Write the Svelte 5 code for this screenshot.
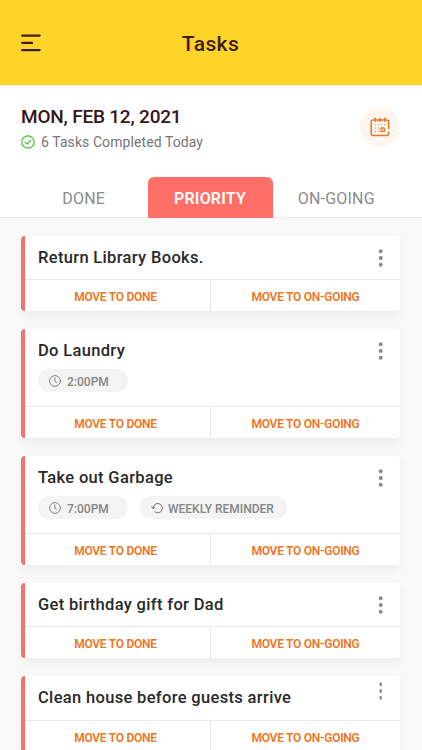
<script lang="ts">
  interface Task {
    id: number;
    title: string;
    time?: string;
    repeat?: string;
    narrowMenu?: boolean;
  }

  const tabs = ['DONE', 'PRIORITY', 'ON-GOING'];
  let activeTab = $state('PRIORITY');

  const tasks: Task[] = [
    { id: 1, title: 'Return Library Books.' },
    { id: 2, title: 'Do Laundry', time: '2:00PM' },
    { id: 3, title: 'Take out Garbage', time: '7:00PM', repeat: 'WEEKLY REMINDER' },
    { id: 4, title: 'Get birthday gift for Dad' },
    { id: 5, title: 'Clean house before guests arrive', narrowMenu: true },
  ];
</script>

<div class="screen">
  <header class="topbar">
    <button class="menu-btn" aria-label="Menu">
      <svg width="20" height="18" viewBox="0 0 20 18" fill="none" stroke="#3b1d12" stroke-width="2.3" stroke-linecap="round">
        <path d="M1.2 1.6h17.4M1.2 8.9H11M1.2 16.1h17.4" />
      </svg>
    </button>
    <h1>Tasks</h1>
  </header>

  <section class="summary">
    <div>
      <h2>MON, FEB 12, 2021</h2>
      <p class="completed">
        <svg width="14" height="14" viewBox="0 0 14 14" fill="none" stroke="#43bf31" stroke-width="1.2" stroke-linecap="round" stroke-linejoin="round">
          <circle cx="7" cy="7" r="6.2" />
          <path d="M4.2 7.2l2 1.9 3.7-3.9" />
        </svg>
        <span>6 Tasks Completed Today</span>
      </p>
    </div>
    <button class="calendar-btn" aria-label="Calendar">
      <svg width="20" height="20" viewBox="0 0 20 20" fill="none" stroke="#e5762a" stroke-width="1.5" stroke-linecap="round" stroke-linejoin="round">
        <path d="M18.7 11.5V5a2 2 0 0 0-2-2H3.2a2 2 0 0 0-2 2v11.6a2 2 0 0 0 2 2h13.5a2 2 0 0 0 2-2V15" />
        <path d="M5.3 1.2v3M10 1.2v3M14.8 1.2v3" />
        <rect x="11" y="11" width="3.4" height="3.4" rx="0.8" />
        <path d="M5.1 7.8h.1M8.3 7.8h.1M11.6 7.8h.1M14.8 7.8h.1M5.1 11h.1M8.3 11h.1M5.1 14.2h.1M8.3 14.2h.1" stroke-width="1.2" />
      </svg>
    </button>
  </section>

  <nav class="tabs">
    {#each tabs as tab}
      <button class="tab" class:active={tab === activeTab} onclick={() => (activeTab = tab)}>{tab}</button>
    {/each}
  </nav>

  <main class="list">
    {#each tasks as task (task.id)}
      <article class="card">
        <div class="card-body" class:last={task.narrowMenu}>
          <div>
            <h3>{task.title}</h3>
            {#if task.time}
              <div class="chips">
                <span class="chip time">
                  <svg width="12" height="12" viewBox="0 0 12 12" fill="none" stroke="#858585" stroke-linecap="round" stroke-linejoin="round">
                    <circle cx="6" cy="6" r="5.4" />
                    <path d="M5.9 2.9v3.4l1.7 1.3" />
                  </svg>
                  <span>{task.time}</span>
                </span>
                {#if task.repeat}
                  <span class="chip repeat">
                    <svg width="12" height="12" viewBox="0 0 12 12" fill="none" stroke="#707070" stroke-linecap="round" stroke-linejoin="round">
                      <path d="M2 6.2a4.7 4.7 0 1 1 1.8 3.7" />
                      <path d="M.5 4.7L2 6.4l1.9-1.3" />
                    </svg>
                    <span>{task.repeat}</span>
                  </span>
                {/if}
              </div>
            {/if}
          </div>
          <button class="more-btn" aria-label="More">
            <svg width="6" height="18" viewBox="0 0 6 18" fill="#8b8b8b">
              {#each [2.2, 9, 15.8] as cy}
                <ellipse cx="2.7" {cy} rx={task.narrowMenu ? 1.3 : 2} ry="2" />
              {/each}
            </svg>
          </button>
        </div>
        <div class="actions">
          <button class="to-done">MOVE TO DONE</button>
          <button>MOVE TO ON-GOING</button>
        </div>
      </article>
    {/each}
  </main>
</div>

<style>
  :global(body) { margin: 0; }
  .screen {
    display: flex;
    flex-direction: column;
    width: 422px;
    height: 750px;
    overflow: hidden;
    background: #f9f9f9;
    font-family: Roboto, "Open Sans", sans-serif;
  }
  h1, h2, h3, p { margin: 0; font-weight: 500; }
  button { border: 0; padding: 0; background: none; font: inherit; cursor: pointer; }
  svg { display: block; flex: none; }

  .topbar {
    display: grid;
    grid-template-columns: 20px 1fr 20px;
    align-items: center;
    flex: none;
    height: 85px;
    padding: 0 22px 0 21px;
    box-sizing: border-box;
    background: #ffd428;
  }
  h1 { padding-top: 2px; text-align: center; font-size: 21px; line-height: 26px; letter-spacing: 0.4px; color: #3b1d12; }

  .summary {
    display: flex;
    justify-content: space-between;
    flex: none;
    height: 92px;
    padding: 20px 22px 0 21px;
    box-sizing: border-box;
    background: #fff;
  }
  h2 { font-size: 19px; line-height: 24px; letter-spacing: -0.2px; color: #351519; }
  .completed { display: flex; align-items: center; gap: 6px; margin-top: 3px; font-size: 14px; line-height: 20px; font-weight: 400; letter-spacing: 0.08px; color: #757575; }
  .calendar-btn {
    display: flex;
    align-items: center;
    justify-content: center;
    width: 40px;
    height: 40px;
    margin: 2px 0 0;
    border-radius: 50%;
    background: #fff6ef;
  }

  .tabs {
    display: flex;
    flex: none;
    height: 41px;
    padding: 0 22px 0 20px;
    background: linear-gradient(#fff 40px, #ededed 40px);
  }
  .tab { flex: 1; padding-top: 2px; font-size: 16px; letter-spacing: 0.2px; color: #8b8b8b; border-radius: 6px 6px 0 0; }
  .tab.active { flex: none; width: 125px; background: #ff6e67; color: #fff; font-weight: 600; }

  .list { display: flex; flex-direction: column; gap: 18px; padding: 18px 22px 0 21px; }
  .card {
    flex: none;
    overflow: hidden;
    border-left: 4px solid #f4716d;
    border-radius: 4px;
    background: #fff;
    box-shadow: 0 4px 8px rgba(0, 0, 0, 0.06);
  }
  .card-body { display: flex; justify-content: space-between; min-height: 43px; padding: 0 16px 0 13px; }
  .card-body.last { min-height: 44px; }
  h3 { padding-top: 11px; font-size: 16.5px; line-height: 21px; letter-spacing: 0.33px; color: #292929; }
  .more-btn { align-self: flex-start; margin-top: 13px; }
  .last .more-btn { margin-top: 6px; }
  .chips { display: flex; gap: 12px; padding: 8px 0 14px; }
  .chip {
    display: flex;
    align-items: center;
    gap: 6px;
    height: 23px;
    padding: 0 13px 0 11px;
    box-sizing: border-box;
    border-radius: 12px;
    background: #f4f4f4;
    color: #868686;
    font-size: 12px;
    font-weight: 500;
  }
  .chip span { padding-top: 2px; }
  .chip.time { width: 90px; }
  .chip.repeat { width: 147px; gap: 5px; }

  .actions { display: flex; height: 31px; border-top: 1px solid #e9e9e9; }
  .actions button { flex: 1; padding-top: 2px; font-size: 12px; font-weight: 600; letter-spacing: -0.25px; color: #ee7521; }
  .actions .to-done { flex: none; width: 186px; padding-right: 4px; border-right: 1px solid #e9e9e9; }
</style>
